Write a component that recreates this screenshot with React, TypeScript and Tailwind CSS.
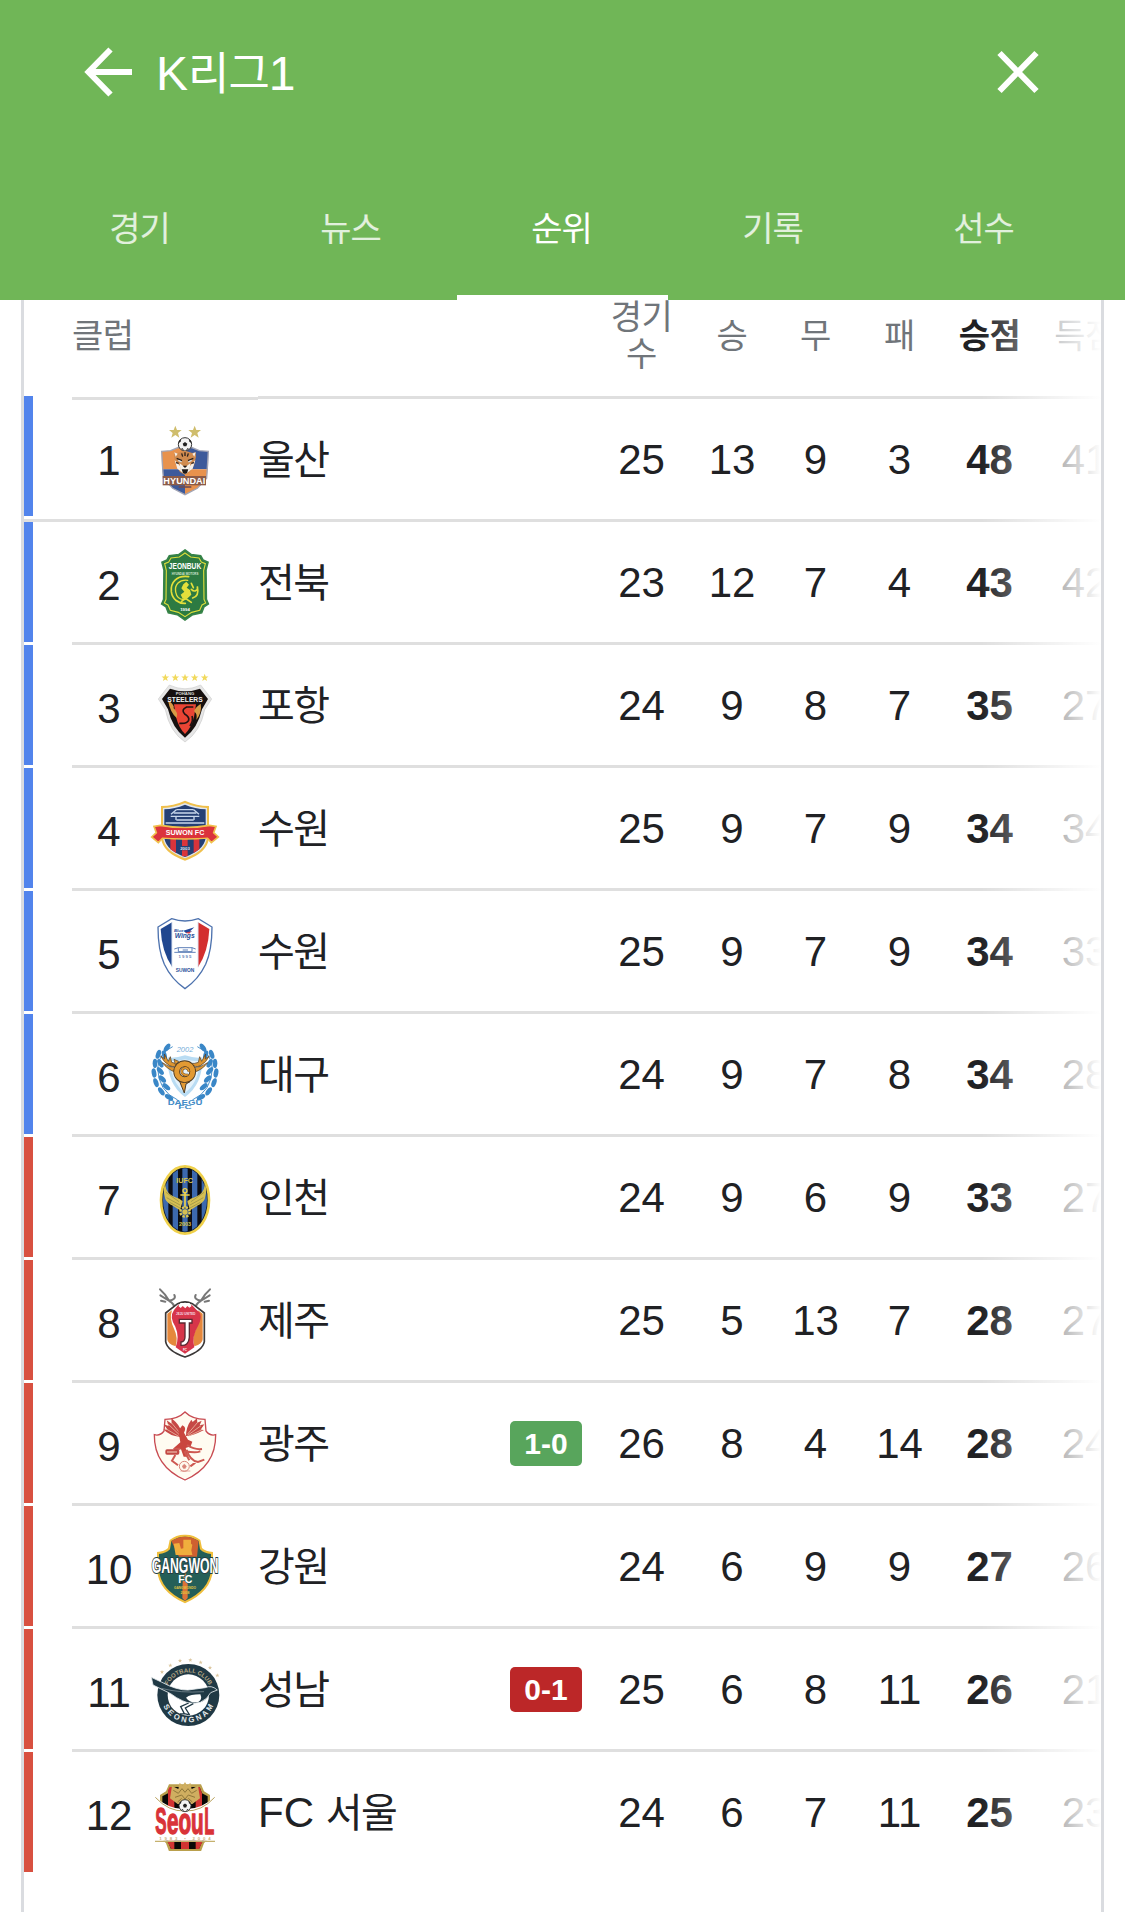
import type { ReactNode } from 'react'
import clsx from 'clsx'

type Team = {
  name: ReactNode
  crest: ReactNode
  // played, won, drawn, lost
  record: [number, number, number, number]
  points: number
  goals: number
  live?: { score: string; winning: boolean }
}

const TABS = ['경기', '뉴스', '순위', '기록', '선수']

function Crest({ top, children }: { top: number; children: ReactNode }) {
  return (
    <svg
      viewBox={`57 ${top} 216 216`}
      className="size-[72px] font-['Liberation_Sans',sans-serif] font-bold"
      textAnchor="middle"
    >
      {children}
    </svg>
  )
}

const STAR = 'M0 -19 L5 -6 L19 -6 L8 3 L12 17 L0 9 L-12 17 L-8 3 L-19 -6 L-5 -6 Z'

function Ball({ x, y, r }: { x: number; y: number; r: number }) {
  return (
    <g transform={`translate(${x} ${y}) scale(${r / 20})`}>
      <circle r="20" fill="#f4f4f4" stroke="#333" strokeWidth="3" />
      <path
        d="M0 -7 L7 -2 L4 6 L-4 6 L-7 -2 Z M-19 -4 L-13 -8 L-12 -16 L-18 -10 Z M19 -4 L13 -8 L12 -16 L18 -10 Z M-12 14 L-8 11 L-3 18 Z M12 14 L8 11 L3 18 Z"
        fill="#222"
      />
    </g>
  )
}

function UlsanCrest() {
  return (
    <Crest top={42}>
      <path d={STAR} transform="translate(136 66)" fill="#cfbd6c" />
      <path d={STAR} transform="translate(194 66)" fill="#cfbd6c" />
      <path d="M95 124 L122 122 L146 112 L165 118 V178 H96 Z" fill="#e8924d" />
      <path d="M235 124 L208 122 L184 112 L165 118 V178 H234 Z" fill="#3d5a9b" />
      <path d="M97 178 H165 V254 L128 235 L100 205 Z" fill="#3d5a9b" />
      <path d="M233 178 H165 V254 L202 235 L230 205 Z" fill="#e8924d" />
      <path
        d="M95 124 L122 122 L146 112 L165 118 L184 112 L208 122 L235 124 L230 205 L202 235 L165 254 L128 235 L100 205 Z"
        fill="none"
        stroke="#a3a5b5"
        strokeWidth="4"
      />
      <Ball x={165} y={103} r={20} />
      <path d="M133 127 L143 129 L165 122 L187 129 L197 127 L198 140 L192 166 L180 186 L165 195 L150 186 L138 166 L132 140 Z" fill="#d08b4f" />
      <path d="M134 150 L150 168 L153 184 L142 176 Z M196 150 L180 168 L177 184 L188 176 Z M133 127 L143 131 L137 140 Z M197 127 L187 131 L193 140 Z" fill="#f5f0ea" />
      <path d="M149 160 L165 172 L181 160 L178 184 L165 193 L152 184 Z" fill="#f5f0ea" />
      <path d="M155 178 H175 L171 189 L165 192 L159 189 Z M158 167 H172 L165 174 Z" fill="#1f1a1a" />
      <path d="M140 145 L156 152 M190 145 L174 152 M165 127 V138 M155 130 L158 140 M175 130 L172 140 M138 158 L146 160 M192 158 L184 160" stroke="#2c211c" strokeWidth="4" />
      <path d="M145 151 L155 156 M185 151 L175 156" stroke="#cfe0ef" strokeWidth="4" />
      <rect x="98" y="198" width="130" height="28" fill="#8b5b48" />
      <text x="163" y="222" fontSize="27" textLength="126" lengthAdjust="spacingAndGlyphs" fill="#fff">HYUNDAI</text>
      <path d="M146 231 H184" stroke="#704c52" strokeWidth="5" />
    </Crest>
  )
}

function JeonbukCrest() {
  return (
    <Crest top={417}>
      <path
        d="M165 420 L184 434 L212 437 L219 450 L234 457 L228 480 L229 568 L235 582 L222 590 L215 608 L188 614 L165 630 L142 614 L115 608 L108 590 L95 582 L101 568 L102 480 L96 457 L111 450 L118 437 L146 434 Z"
        fill="#2c7a42"
        stroke="#378448"
        strokeWidth="5"
      />
      <path
        d="M165 429 L182 441 L207 444 L214 456 L226 461 L221 482 L222 568 L227 579 L216 585 L209 601 L185 607 L165 620 L145 607 L121 601 L114 585 L103 579 L108 568 L109 482 L104 461 L116 456 L123 444 L148 441 Z"
        fill="none"
        stroke="#d9dc3c"
        strokeWidth="3.5"
      />
      <text x="165" y="478" fontSize="27" textLength="97" lengthAdjust="spacingAndGlyphs" fill="#fff">JEONBUK</text>
      <text x="165" y="494" fontSize="12" textLength="80" lengthAdjust="spacingAndGlyphs" fill="#d5e6d4">HYUNDAI MOTORS</text>
      <g fill="none" stroke="#e3df3b" strokeLinecap="round">
        <path d="M176 500 C140 495 121 517 124 545 C127 568 145 581 166 580" strokeWidth="5" />
        <path d="M173 511 C148 508 133 524 137 546 C140 562 151 570 166 568" strokeWidth="4" />
        <path d="M184 538 C194 548 205 541 202 529 C206 548 204 560 188 564" strokeWidth="5" />
        <path d="M154 575 L166 565 L184 577 M184 520 L190 533" strokeWidth="5" />
      </g>
      <path d="M160 523 L169 515 L177 524 L170 533 L180 540 L184 554 L171 566 L158 566 L152 554 L163 545 L154 535 Z" fill="#e3df3b" />
      <text x="165" y="603" fontSize="13" fill="#fff">1994</text>
    </Crest>
  )
}

function PohangCrest() {
  return (
    <Crest top={36}>
      {[106, 136, 165, 194, 224].map((x) => (
        <path key={x} d={STAR} transform={`translate(${x} 53) scale(.6)`} fill="#f1d95c" />
      ))}
      <path d="M118 75 Q165 98 212 75 L245 117 L224 149 Q211 215 165 246 Q119 215 106 149 L85 117 Z" fill="#e6e6e6" stroke="#cdcdcd" strokeWidth="2" />
      <path d="M120 86 Q165 102 210 86 L234 117 L216 148 Q203 205 165 233 Q127 205 114 148 L96 117 Z" fill="#16100f" />
      <path d="M132 133 H198 L192 171 Q184 203 165 222 Q146 203 138 171 Z" fill="#ea4434" />
      <path d="M190 141 H170 Q152 149 164 162 Q179 171 176 181 Q172 192 148 190 M180 198 Q191 181 186 168" fill="none" stroke="#221312" strokeWidth="5" />
      <path d="M114 121 Q134 134 131 145 Q145 157 140 174 Q120 157 114 121 Z" fill="#d79a45" />
      <path d="M212 131 Q190 147 193 155 Q203 161 199 180 Q217 156 212 131 Z" fill="#d79a45" />
      <text x="165" y="106" fontSize="13" textLength="56" lengthAdjust="spacingAndGlyphs" fill="#ddd">POHANG</text>
      <text x="165" y="126" fontSize="22" textLength="106" lengthAdjust="spacingAndGlyphs" fill="#f2f2f2">STEELERS</text>
    </Crest>
  )
}

function SuwonFcCrest() {
  return (
    <Crest top={405}>
      <path d="M93 438 Q130 438 165 422 Q200 438 237 438 V535 Q231 580 165 602 Q99 580 93 535 Z" fill="#f0c04c" />
      <path d="M99 444 Q132 443 165 429 Q198 443 231 444 V535 Q225 574 165 595 Q105 574 99 535 Z" fill="#dfe5ef" />
      <path d="M103 448 Q134 447 165 434 Q196 447 227 448 V535 Q221 571 165 591 Q109 571 103 535 Z" fill="#243f74" />
      <path d="M121 532 H138 V579 L121 568 Z M156 532 H173 V589 H156 Z M191 532 H208 V568 L191 579 Z" fill="#d9343b" />
      <path d="M139 449 H191 M131 459 H199 M122 469 H208 M139 480 H191 M107 489 H223" stroke="#c7d7ec" strokeWidth="4" />
      <path d="M139 449 L123 463 M191 449 L207 463 M138 480 V470 M192 480 V470" stroke="#c7d7ec" strokeWidth="4" />
      <path d="M65 531 L79 518 L72 499 L91 496 Q165 509 239 496 L258 499 L251 518 L265 531 L244 548 L232 534 Q165 539 98 534 L85 548 Z" fill="#db333c" stroke="#f0c04c" strokeWidth="5" />
      <path d="M89 500 Q165 512 241 500 L237 532 Q165 538 93 532 Z" fill="#db333c" />
      <text x="165" y="526" fontSize="24" textLength="116" lengthAdjust="spacingAndGlyphs" fill="#fff">SUWON FC</text>
      <rect x="147" y="558" width="36" height="13" rx="3" fill="#243f74" />
      <text x="165" y="569" fontSize="13" fill="#dbe6f4">2003</text>
    </Crest>
  )
}

function SuwonSamsungCrest() {
  return (
    <Crest top={54}>
      <path
        d="M84 81 L125 56 Q165 70 205 56 L246 81 Q246 150 227 193 Q205 239 165 266 Q125 239 103 193 Q84 150 84 81 Z"
        fill="#fff"
        stroke="#4d72ae"
        strokeWidth="4"
      />
      <path d="M92 87 L126 67 V200 Q95 154 92 87 Z" fill="#20478f" />
      <path d="M238 87 L204 67 V202 Q235 154 238 87 Z" fill="#d32f2f" />
      <path d="M126 66 V202 M204 66 V202" stroke="#dce5f4" strokeWidth="3" />
      <path d="M160 92 L193 82 L180 94 L187 95 L169 100 Z" fill="#1f479a" />
      <path d="M166 98 L183 94 L178 101 Z" fill="#d8414a" />
      <text x="146" y="97" fontSize="13" fontStyle="italic" fill="#284f98">Blue</text>
      <text x="164" y="114" fontSize="19" fontStyle="italic" textLength="60" lengthAdjust="spacingAndGlyphs" fill="#284f98">Wings</text>
      <path d="M145 143 H186 V155 H145 Z M133 147 L145 143 M186 143 L197 147 M133 157 H197 M158 150 H174" fill="none" stroke="#5f80b8" strokeWidth="3" />
      <text x="165" y="174" fontSize="13" textLength="39" fill="#6684b6">1995</text>
      <text x="165" y="215" fontSize="18" textLength="56" lengthAdjust="spacingAndGlyphs" fill="#284f98">SUWON</text>
    </Crest>
  )
}

const LEAVES = [
  [111, 443, -35],
  [85, 463, -20],
  [75, 490, 0],
  [72, 519, 10],
  [78, 548, 20],
  [94, 574, 35],
  [117, 592, 60],
  [103, 465, 15],
  [91, 490, 30],
  [91, 513, 40],
  [97, 537, 45],
  [109, 560, 50],
]

function DaeguCrest() {
  return (
    <Crest top={423}>
      <path d="M165 466 Q196 476 217 472 Q219 553 165 591 Q111 553 113 472 Q134 476 165 466 Z" fill="#b9dcf3" />
      <path d="M165 478 Q192 486 208 482 Q208 546 165 578 Q122 546 122 482 Q138 486 165 478 Z" fill="#e4f2fb" />
      {[1, -1].map((side) => (
        <g key={side} transform={side === -1 ? 'translate(330 0) scale(-1 1)' : undefined}>
          <path d="M128 440 Q85 460 83 505 Q85 573 143 600" fill="none" stroke="#4b92cc" strokeWidth="3" />
          {LEAVES.map(([x, y, angle]) => (
            <ellipse key={`${x}-${y}`} cx={x} cy={y} rx="7" ry="14" transform={`rotate(${-angle} ${x} ${y})`} fill="#3a87c7" />
          ))}
          <path
            d="M148 490 Q136 505 119 497 Q101 487 92 468 L104 477 L103 462 L115 484 L121 470 L125 487 Q137 492 148 490 Z M97 488 Q112 508 135 516 L141 504 Q116 502 97 488 Z"
            fill="#dc9531"
            stroke="#4d3b25"
            strokeWidth="2"
          />
        </g>
      ))}
      <path d="M147 539 L152 552 L163 579 L168 552 L180 545 Z" fill="#e29a33" stroke="#4d3b25" strokeWidth="3" />
      <circle cx="164" cy="515" r="24" fill="#e4f2fb" stroke="#4d3b25" strokeWidth="20" />
      <circle cx="164" cy="515" r="24" fill="none" stroke="#e29a33" strokeWidth="15" />
      <path d="M146 484 L132 478 L136 494 Z" fill="#e29a33" stroke="#4d3b25" strokeWidth="2" />
      <path d="M177 515 Q175 502 163 504 Q153 508 156 519 Q162 528 174 524" fill="none" stroke="#67431c" strokeWidth="8" />
      <path d="M177 515 Q175 502 163 504 Q153 508 156 519 Q162 528 174 524" fill="none" stroke="#e29a33" strokeWidth="5" />
      <text x="165" y="456" fontSize="20" textLength="50" lengthAdjust="spacingAndGlyphs" fill="#73add9" className="font-normal italic">2002</text>
      <text x="165" y="614" fontSize="19" textLength="104" lengthAdjust="spacingAndGlyphs" fill="#428bc6">DAEGU</text>
      <text x="165" y="628" fontSize="14" textLength="40" lengthAdjust="spacingAndGlyphs" fill="#428bc6">FC</text>
    </Crest>
  )
}

function IncheonCrest() {
  return (
    <Crest top={42}>
      <clipPath id="incheon-oval">
        <ellipse cx="165" cy="150" rx="66" ry="95" />
      </clipPath>
      <ellipse cx="165" cy="150" rx="72" ry="101" fill="#17212f" stroke="#efd04a" strokeWidth="8" />
      <g clipPath="url(#incheon-oval)">
        <rect x="95" y="50" width="140" height="200" fill="#0c0d12" />
        {[99, 128, 157, 186, 215].map((x) => (
          <rect key={x} x={x} y="50" width="16" height="200" fill="#3c69ae" />
        ))}
      </g>
      <text x="164" y="99" fontSize="24" textLength="50" lengthAdjust="spacingAndGlyphs" fill="#d9c648">IUFC</text>
      <path d="M106 100 Q105 136 148 146 L158 154 L150 181 Q128 166 122 164 Q105 154 104 139 Q98 120 106 100 Z" fill="#d5bf52" />
      <path d="M224 100 Q225 136 182 146 L172 154 L180 181 Q202 166 208 164 Q225 154 226 139 Q232 120 224 100 Z" fill="#d5bf52" />
      <path d="M108 127 L147 155 M110 143 L150 165 M119 157 L150 174 M222 127 L183 155 M220 143 L180 165 M211 157 L180 174" stroke="#8f8846" strokeWidth="2" />
      <circle cx="165" cy="122" r="6" fill="none" stroke="#eed24b" strokeWidth="4" />
      <path d="M165 128 V180 M151 135 H179" stroke="#eed24b" strokeWidth="5" />
      <circle cx="165" cy="186" r="14" fill="#3c5d89" stroke="#dfc750" strokeWidth="7" strokeDasharray="7 4" />
      <circle cx="165" cy="186" r="8" fill="#d5bf52" />
      <text x="165" y="229" fontSize="16" textLength="36" lengthAdjust="spacingAndGlyphs" fill="#d9c648">2003</text>
    </Crest>
  )
}

function JejuCrest() {
  return (
    <Crest top={411}>
      <g fill="none" stroke="#777" strokeWidth="6" strokeLinecap="round">
        <path d="M134 477 Q133 461 118 453 L91 436 M117 452 L105 434 L90 418 M117 452 Q140 448 133 435 M106 455 L93 452" />
        <path d="M196 477 Q197 461 212 453 L239 436 M213 452 L225 434 L240 418 M213 452 Q190 448 197 435 M224 455 L237 452" />
      </g>
      <path d="M107 489 L143 461 Q165 450 187 461 L223 489 V575 Q218 603 165 621 Q112 603 107 575 Z" fill="#fff" stroke="#3c3939" strokeWidth="5" />
      <path d="M112 491 L126 481 Q117 507 132 536 Q145 563 137 589 Q112 582 112 568 Z" fill="#e5883c" />
      <path d="M218 491 L204 481 Q213 507 198 536 Q185 563 193 589 Q218 582 218 568 Z" fill="#e5883c" />
      <path d="M132 480 L145 464 H185 L200 480 Q222 493 204 528 Q184 561 193 592 L165 611 L137 592 Q149 560 136 530 Q117 501 132 480 Z" fill="#d7354a" />
      <path d="M145 468 L152 459 H178 L185 468 L178 473 L172 468 L166 475 L158 468 L152 474 Z" fill="#fff" />
      <text x="167" y="495" fontSize="11" textLength="58" lengthAdjust="spacingAndGlyphs" fill="#f6dfe2">JEJU UNITED</text>
      <path d="M148 508 H186 V519 H178 V562 Q176 588 153 586 V576 Q165 575 165 561 V519 H148 Z" fill="#fff" stroke="#5c2932" strokeWidth="4" />
      <text x="165" y="602" fontSize="9" fill="#fff">FC</text>
    </Crest>
  )
}

function GwangjuCrest() {
  return (
    <Crest top={60}>
      <path
        d="M105 88 Q143 88 165 66 Q187 88 225 88 L228 123 Q240 139 257 134 Q258 228 165 270 Q72 228 73 134 Q90 139 102 123 Z"
        fill="#fffcf1"
        stroke="#c84b52"
        strokeWidth="4"
      />
      <path d="M150 141 Q119 138 100 118 L113 119 L101 103 L116 108 L110 91 L125 101 L124 84 L137 96 Q153 113 155 132 Z" fill="#c64845" />
      <path d="M168 138 Q188 138 222 120 L212 119 L223 103 L209 106 L215 92 L202 98 L201 85 L188 96 L184 89 Q168 111 168 138 Z" fill="#c64845" />
      <path d="M112 100 L150 136 M125 99 L152 132 M107 116 L146 139 M203 97 L172 133 M213 107 L173 136 M216 119 L176 138" stroke="#e9b9a1" strokeWidth="2.5" />
      <path d="M145 122 L157 106 Q171 112 162 128 L174 149 L187 155 L182 169 L167 174 L175 200 H161 L153 178 L129 176 L151 157 Z" fill="#c9463e" />
      <path d="M170 179 Q179 211 204 216 L223 209 M171 165 Q195 180 216 177 M166 183 Q195 190 211 184 M163 184 L178 211 M151 176 L131 177 M136 195 L126 212 L144 226 M196 218 L181 229" fill="none" stroke="#ce5951" strokeWidth="6" />
      <rect x="106" y="178" width="42" height="16" rx="5" fill="#c34a45" />
      <path d="M112 186 H142" stroke="#f5d5be" strokeWidth="4" strokeDasharray="4 2" />
      <circle cx="163" cy="229" r="15" fill="#fff8ed" stroke="#d98478" strokeWidth="3" />
      <path d="M163 223 L169 228 L166 235 H160 L157 228 Z M151 243 H181" fill="#d98478" stroke="#d98478" strokeWidth="2" />
    </Crest>
  )
}

function GangwonCrest() {
  return (
    <Crest top={429}>
      <path
        d="M119 450 Q140 433 165 434 Q190 433 211 450 L216 474 Q226 485 249 486 V540 Q244 605 165 640 Q86 605 81 540 V486 Q104 485 114 474 Z"
        fill="#f0bf3d"
      />
      <path d="M124 453 Q165 427 206 453 L210 478 Q223 491 243 492 V540 Q238 600 165 633 Q92 600 87 540 V492 Q107 491 120 478 Z" fill="#245f58" />
      <path d="M124 453 Q165 427 206 453 L201 500 H147 Z" fill="#cf6030" />
      <path d="M131 461 L148 459 L153 476 L160 475 V449 H183 V461 L187 464 L184 481 L187 495 H137 Z" fill="#f0ae3d" />
      <path d="M158 575 L165 535 L173 575 V624 L165 633 L157 624 Z" fill="#dd7438" />
      <text x="165" y="548" fontSize="66" textLength="200" lengthAdjust="spacingAndGlyphs" fill="#fff" stroke="#233c42" strokeWidth="6" paintOrder="stroke">GANGWON</text>
      <text x="166" y="579" fontSize="35" textLength="42" lengthAdjust="spacingAndGlyphs" fill="#fff" stroke="#245f58" strokeWidth="4" paintOrder="stroke">FC</text>
      <text x="165" y="598" fontSize="13" textLength="66" lengthAdjust="spacingAndGlyphs" fill="#e3c63f">GANGWONDO</text>
      <text x="165" y="612" fontSize="12" fill="#e3c63f">2008</text>
    </Crest>
  )
}

const SEONGNAM_STARS = [
  [96, 96],
  [121, 76],
  [150, 62],
  [181, 60],
  [212, 67],
  [240, 83],
  [262, 106],
]

function SeongnamCrest() {
  return (
    <Crest top={48}>
      <defs>
        <path id="seongnam-top" d="M110 145 A68 68 0 0 1 240 145" />
        <path id="seongnam-bottom" d="M93 165 A82 82 0 0 0 257 165" />
      </defs>
      {SEONGNAM_STARS.map(([x, y]) => (
        <path key={x} d={STAR} transform={`translate(${x} ${y}) scale(.33)`} fill="#dcc7a0" />
      ))}
      <circle cx="175" cy="165" r="93" fill="#203945" />
      <circle cx="175" cy="165" r="62" fill="#fff" />
      <text fontSize="18" fill="#b9a985">
        <textPath href="#seongnam-top" startOffset="50%">FOOTBALL CLUB</textPath>
      </text>
      <text fontSize="23" fill="#e9eef0">
        <textPath href="#seongnam-bottom" startOffset="50%" textLength="190">SEONGNAM</textPath>
      </text>
      <path
        d="M64 112 L94 126 Q140 151 174 150 L226 143 Q244 134 262 150 L242 158 Q232 178 211 187 Q181 194 157 182 Q139 174 122 161 L69 135 Z"
        fill="#203945"
        stroke="#e9eef0"
        strokeWidth="2.5"
      />
      <path d="M168 173 Q181 163 211 163 Q218 178 205 186 Q181 191 168 173 Z" fill="#fff" />
      <path d="M94 145 Q150 160 222 155" fill="none" stroke="#8d9ca2" strokeWidth="2" />
      <path d="M176 189 L152 200 L163 221 L150 222 M190 191 L166 204 L179 225 M163 221 L176 224" fill="none" stroke="#203945" strokeWidth="4" />
    </Crest>
  )
}

function SeoulCrest() {
  return (
    <Crest top={417}>
      <path d="M117 433 H213 L222 454 L240 465 V590 L222 610 L213 634 H117 L108 610 L90 590 V465 L108 454 Z" fill="#baa04d" />
      <path d="M121 441 H209 L216 460 L233 469 V590 L215 608 L207 627 H123 L115 608 L97 590 V469 L114 460 Z" fill="#090806" />
      <path d="M114 451 L119 441 H133 V627 H124 L114 608 Z M153 441 H177 V627 H153 Z M197 441 H209 L216 460 V608 L207 627 H197 Z" fill="#d13432" />
      <path d="M120 475 L126 438 L145 447 L149 428 L158 437 L165 426 L172 437 L181 428 L185 447 L204 438 L210 475 L187 492 H143 Z" fill="#cfae60" />
      <path d="M130 451 L145 460 L156 446 L165 457 L174 446 L185 460 L200 451 M135 472 L155 465 L165 477 L175 465 L195 472 M143 486 L155 475 M187 486 L175 475" fill="none" stroke="#8f7739" strokeWidth="3" />
      <path d="M75 469 Q115 509 165 507 Q215 509 255 469 V602 H75 Z" fill="#fff" />
      <path d="M76 472 Q115 515 165 513 Q215 515 254 472" fill="none" stroke="#b8a05b" strokeWidth="3" />
      <Ball x={165} y={497} r={18} />
      <g fill="#d93338" stroke="#d93338" strokeWidth="4">
        <text x="93" y="581" fontSize="112" textLength="34" lengthAdjust="spacingAndGlyphs">S</text>
        <text x="166" y="581" fontSize="108" textLength="110" lengthAdjust="spacingAndGlyphs">eou</text>
        <text x="238" y="581" fontSize="112" textLength="30" lengthAdjust="spacingAndGlyphs">L</text>
      </g>
      <text x="165" y="599" fontSize="13" textLength="154" fill="#cbb078">1983 • 2004</text>
      <path d="M75 604 H255" stroke="#c5b16e" strokeWidth="4" />
    </Crest>
  )
}

const TEAMS: Team[] = [
  { name: '울산', crest: <UlsanCrest />, record: [25, 13, 9, 3], points: 48, goals: 41 },
  { name: '전북', crest: <JeonbukCrest />, record: [23, 12, 7, 4], points: 43, goals: 42 },
  { name: '포항', crest: <PohangCrest />, record: [24, 9, 8, 7], points: 35, goals: 27 },
  { name: '수원', crest: <SuwonFcCrest />, record: [25, 9, 7, 9], points: 34, goals: 34 },
  { name: '수원', crest: <SuwonSamsungCrest />, record: [25, 9, 7, 9], points: 34, goals: 33 },
  { name: '대구', crest: <DaeguCrest />, record: [24, 9, 7, 8], points: 34, goals: 28 },
  { name: '인천', crest: <IncheonCrest />, record: [24, 9, 6, 9], points: 33, goals: 27 },
  { name: '제주', crest: <JejuCrest />, record: [25, 5, 13, 7], points: 28, goals: 27 },
  {
    name: '광주',
    crest: <GwangjuCrest />,
    record: [26, 8, 4, 14],
    points: 28,
    goals: 24,
    live: { score: '1-0', winning: true },
  },
  { name: '강원', crest: <GangwonCrest />, record: [24, 6, 9, 9], points: 27, goals: 26 },
  {
    name: '성남',
    crest: <SeongnamCrest />,
    record: [25, 6, 8, 11],
    points: 26,
    goals: 21,
    live: { score: '0-1', winning: false },
  },
  {
    name: (
      <>
        <span className="text-[42px] tracking-normal">FC </span>서울
      </>
    ),
    crest: <SeoulCrest />,
    record: [24, 6, 7, 11],
    points: 25,
    goals: 23,
  },
]

const STAT_WIDTHS = ['w-[91px]', 'w-[90px]', 'w-[77px]', 'w-[91px]', 'w-[89px]', 'w-[102px]']

function Header() {
  return (
    <header className="flex h-[300px] flex-col justify-between bg-[#70b657] text-white">
      <div className="flex h-[144px] items-center pr-[83px] pl-[83px]">
        <svg viewBox="0 0 50 50" className="size-[50px]" fill="none" stroke="currentColor" strokeWidth="6">
          <path d="M49 25 H6 M27.5 2.5 L5.5 25 L27.5 47.5" />
        </svg>
        <h1 className="ml-[23px] flex grow items-baseline pt-[3px] text-[48px] leading-none">
          K<span className="text-[45px] tracking-[-1px]">리그</span>1
        </h1>
        <svg viewBox="0 0 48 48" className="size-[48px]" fill="none" stroke="currentColor" strokeWidth="6">
          <path d="M5.5 5 L42.5 43 M42.5 5 L5.5 43" />
        </svg>
      </div>
      <nav className="flex h-[144px] px-[35px]">
        {TABS.map((tab) => (
          <button
            key={tab}
            className={clsx(
              'flex w-[211px] items-center justify-center border-b-[5px] pt-[7px] pr-[2px] text-[34px] tracking-[-1px]',
              tab === '순위' ? 'border-white' : 'border-transparent text-white/80',
            )}
          >
            {tab}
          </button>
        ))}
      </nav>
    </header>
  )
}

function ColumnTitles() {
  return (
    <div className="flex h-24 items-center pl-12 text-[34px] leading-[37px] tracking-[-0.5px] text-[#70757a]">
      <span className="w-[524px] shrink-0 pb-6">클럽</span>
      <span className="w-[91px] shrink-0 pb-6 text-center">
        경기
        <br />수
      </span>
      <span className="w-[90px] shrink-0 pb-6 text-center">승</span>
      <span className="w-[77px] shrink-0 pb-6 text-center">무</span>
      <span className="w-[91px] shrink-0 pb-6 text-center">패</span>
      <span className="w-[89px] shrink-0 pb-6 text-center font-bold text-[#202124]">승점</span>
      <span className="w-[102px] shrink-0 pb-6 text-center">득점</span>
    </div>
  )
}

function TeamRow({ team, rank }: { team: Team; rank: number }) {
  const first = rank === 1
  const stats = [...team.record, team.points, team.goals]

  return (
    <li className={clsx('flex h-[123px]', first && 'border-b-[3px] border-[#dfdfdf]')}>
      <div
        className={clsx(
          'mr-[39px] h-[120px] w-[9px] shrink-0',
          rank <= 6 ? 'bg-[#5284ec]' : 'bg-[#d85040]',
          first && '-mt-[3px]',
        )}
      />
      <div
        className={clsx(
          'flex shrink-0 items-center text-[42px] leading-none',
          !first && rank < 12 && 'border-b-[3px] border-[#dfdfdf]',
          rank === 12 && 'pb-[3px]',
        )}
      >
        <div className={clsx('flex w-[186px] items-center gap-[3px]', first ? 'pt-[2px]' : 'pt-[6px]')}>
          <span className="w-[74px] pt-[2px] text-center">{rank}</span>
          {team.crest}
        </div>
        <span className="w-[150px] pt-[2px] text-[40px] tracking-[-1.5px] whitespace-nowrap">{team.name}</span>
        <div className="flex w-[188px] justify-end pr-[14px]">
          {team.live && (
            <span
              className={clsx(
                'flex h-[45px] w-[72px] items-center justify-center rounded-[5px] pt-px text-[30px] font-bold text-white',
                team.live.winning ? 'bg-[#58a55c]' : 'bg-[#bc2728]',
              )}
            >
              {team.live.score}
            </span>
          )}
        </div>
        {stats.map((value, i) => (
          <span key={i} className={clsx('shrink-0 pt-[2px] text-center', STAT_WIDTHS[i], i === 4 && 'font-bold')}>
            {value}
          </span>
        ))}
      </div>
    </li>
  )
}

export default function App() {
  return (
    <div className="h-[1912px] w-[1125px] overflow-hidden bg-white font-['Liberation_Sans','Noto_Sans_CJK_KR',sans-serif] text-[#202124]">
      <Header />
      <main className="relative mx-[21px] h-[1612px] overflow-hidden border-x-[3px] border-[#dadce0]">
        <ColumnTitles />
        <div className="flex h-[3px] pl-12">
          <div className="h-[3px] w-[186px] translate-y-px bg-[#dfdfdf]" />
          <div className="h-[3px] grow bg-[#dfdfdf]" />
        </div>
        <ul>
          {TEAMS.map((team, i) => (
            <TeamRow key={i} team={team} rank={i + 1} />
          ))}
        </ul>
        <div className="absolute inset-y-0 right-0 w-[120px] bg-linear-to-r from-white/0 to-white" />
      </main>
    </div>
  )
}
